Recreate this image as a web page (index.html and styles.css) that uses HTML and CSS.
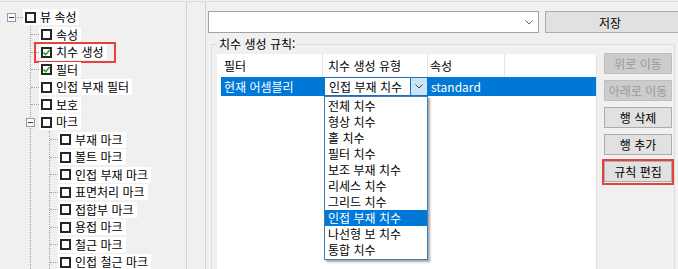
FILE: index.html
```html
<!DOCTYPE html>
<html lang="ko">
<head>
  <meta charset="UTF-8">
  <title>뷰 속성</title>
  <link rel="stylesheet" href="styles.css">
</head>
<body>
  <div class="app">
    <aside class="tree-pane">
      <ul class="tree">
        <li>
          <div class="row root"><span class="exp"></span><span class="hl short"></span><span class="item"><i class="cb"></i>뷰 속성</span></div>
          <ul class="kids">
            <li><div class="row"><span class="hl"></span><span class="item"><i class="cb"></i>속성</span></div></li>
            <li><div class="row"><span class="hl"></span><span class="item callout"><i class="cb"><svg viewBox="0 0 7 7" width="7" height="7"><path d="M0.5 3.6 L2.7 5.7 L6.6 1.1" fill="none" stroke="#1fa51f" stroke-width="1.6"/></svg></i>치수 생성</span></div></li>
            <li><div class="row"><span class="hl"></span><span class="item"><i class="cb"><svg viewBox="0 0 7 7" width="7" height="7"><path d="M0.5 3.6 L2.7 5.7 L6.6 1.1" fill="none" stroke="#1fa51f" stroke-width="1.6"/></svg></i>필터</span></div></li>
            <li><div class="row"><span class="hl"></span><span class="item"><i class="cb"></i>인접 부재 필터</span></div></li>
            <li><div class="row"><span class="hl"></span><span class="item"><i class="cb"></i>보호</span></div></li>
            <li class="open">
              <div class="row"><span class="exp"></span><span class="item"><i class="cb"></i>마크</span></div>
              <ul class="kids">
                <li><div class="row"><span class="hl"></span><span class="item"><i class="cb"></i>부재 마크</span></div></li>
                <li><div class="row"><span class="hl"></span><span class="item"><i class="cb"></i>볼트 마크</span></div></li>
                <li><div class="row"><span class="hl"></span><span class="item"><i class="cb"></i>인접 부재 마크</span></div></li>
                <li><div class="row"><span class="hl"></span><span class="item"><i class="cb"></i>표면처리 마크</span></div></li>
                <li><div class="row"><span class="hl"></span><span class="item"><i class="cb"></i>접합부 마크</span></div></li>
                <li><div class="row"><span class="hl"></span><span class="item"><i class="cb"></i>용접 마크</span></div></li>
                <li><div class="row"><span class="hl"></span><span class="item"><i class="cb"></i>철근 마크</span></div></li>
                <li><div class="row"><span class="hl"></span><span class="item"><i class="cb"></i>인접 철근 마크</span></div></li>
              </ul>
            </li>
          </ul>
        </li>
      </ul>
    </aside>

    <div class="splitter"></div>

    <main class="main">
      <div class="toolbar">
        <div class="combo">
          <svg class="chev" viewBox="0 0 8 5" width="8" height="5"><path d="M0.5 0.5 L4 4 L7.5 0.5" fill="none" stroke="#606060" stroke-width="1"/></svg>
        </div>
        <button class="btn save">저장</button>
      </div>

      <fieldset class="rules">
        <legend>치수 생성 규칙:</legend>
        <div class="grid">
          <div class="grid-head">
            <div class="hc c1">필터</div>
            <div class="hc c2">치수 생성 유형</div>
            <div class="hc c3">속성</div>
            <div class="hc c4"></div>
          </div>
          <div class="grid-row selected">
            <div class="cell c1">현재 어셈블리</div>
            <div class="cell c2">
              <div class="editor">
                <span class="editor-text">인접 부재 치수</span>
                <span class="editor-btn"><svg viewBox="0 0 8 5" width="8" height="5"><path d="M0.5 0.5 L4 4 L7.5 0.5" fill="none" stroke="#404040" stroke-width="1"/></svg></span>
              </div>
            </div>
            <div class="cell c3">standard</div>
            <div class="cell c4"></div>
          </div>

          <ul class="dropdown">
            <li>전체 치수</li>
            <li>형상 치수</li>
            <li>홀 치수</li>
            <li>필터 치수</li>
            <li>보조 부재 치수</li>
            <li>리세스 치수</li>
            <li>그리드 치수</li>
            <li class="active">인접 부재 치수</li>
            <li>나선형 보 치수</li>
            <li>통합 치수</li>
          </ul>
        </div>

        <div class="actions">
          <button class="btn" disabled>위로 이동</button>
          <button class="btn" disabled>아래로 이동</button>
          <button class="btn">행 삭제</button>
          <button class="btn">행 추가</button>
          <button class="btn callout-btn">규칙 편집</button>
        </div>
      </fieldset>
    </main>
  </div>
</body>
</html>
```

FILE: styles.css
```css
body { margin: 0; background-color: #f0f0f0; color: #000; font-family: "Noto Sans CJK KR", "Malgun Gothic", sans-serif; font-size: 12px; }
.app { display: flex; height: 267px; margin-top: 1px; border-top: 1px solid #dcdcdc; overflow: hidden; }

/* tree */
.tree-pane { width: 187px; flex: none; box-sizing: border-box; border-right: 1px solid #d4d4d4; padding-top: 6.25px; overflow: hidden; }
.tree, .kids { list-style: none; margin: 0; padding: 0; }
.kids { margin-left: 30px; border-left: 1px dotted #a0a0a0; }
.kids .kids { margin-left: 18px; min-height: 160px; }
.row { display: flex; align-items: center; height: 17.5px; }
.row.root { padding-left: 7px; }
.hl { width: 8px; flex: none; border-top: 1px dotted #a0a0a0; }
.hl.short { width: 6px; margin-left: 1px; }
.exp { width: 9px; height: 9px; flex: none; box-sizing: border-box; border: 1px solid #9a9a9a; background: #fbfbfb; display: flex; align-items: center; justify-content: center; }
.exp::before { content: ""; width: 5px; height: 1px; background: #1f3d8f; }
.kids .exp { margin-left: -5px; margin-right: 4px; }
.item { display: flex; align-items: center; gap: 4px; height: 16px; line-height: 16px; padding: 0 3px 0 2px; background: #fff; white-space: nowrap; position: relative; }
.cb { width: 11px; height: 11px; flex: none; box-sizing: border-box; border: 2px solid #262626; background: #fff; display: flex; align-items: center; justify-content: center; }
.cb svg { display: block; }
.callout::after { content: ""; position: absolute; left: -5px; right: -9px; top: -2px; bottom: -3px; border: 2px solid #e8403c; }

.splitter { width: 19px; flex: none; box-sizing: border-box; border-right: 1px solid #d4d4d4; }

/* right side */
.main { flex: 1; min-width: 0; overflow: hidden; padding-left: 2px; }
.toolbar { display: flex; gap: 6px; margin-top: 9px; height: 22px; }
.combo { width: 331px; flex: none; box-sizing: border-box; border: 1px solid #a2a2a2; background: #fff; display: flex; align-items: center; justify-content: flex-end; padding-right: 5px; }
.btn { font-family: inherit; font-size: 12px; height: 21px; line-height: 17px; padding: 0; box-sizing: border-box; border: 1px solid #adadad; background: #e1e1e1; color: #000; }
.btn:disabled { background: #cccccc; border-color: #bfbfbf; color: #9a9a9a; }
.btn.save { width: 140px; height: 22px; flex: none; padding-right: 10px; }

.rules { margin: 4px 0 0 3px; padding: 3px 1px 0 5px; width: 464px; height: 260px; box-sizing: border-box; border: 1px solid #dcdcdc; display: flex; gap: 7px; min-inline-size: 0; }
.rules legend { padding: 0 2px; line-height: 14px; }

.grid { width: 380px; flex: none; box-sizing: border-box; background: #fff; border-right: 1px solid #e3e3e3; position: relative; }
.grid-head { display: grid; grid-template-columns: 106px 105px 77px 1fr; height: 23px; line-height: 23px; }
.hc { border-right: 1px solid #e5e5e5; white-space: nowrap; }
.hc.c1 { padding-left: 7px; }
.hc.c2 { padding-left: 5px; }
.hc.c3 { padding-left: 2px; }
.hc.c4 { border-right: none; }
.grid-row { display: grid; grid-template-columns: 102px 105px 77px 1fr; height: 19px; line-height: 19px; margin-left: 4px; }
.grid-row.selected { background: #0078d7; color: #fff; }
.cell { white-space: nowrap; }
.cell.c1 { padding-left: 3px; }
.cell.c2 { padding-left: 1px; }
.cell.c3 { padding-left: 3px; }
.editor { display: flex; height: 19px; box-sizing: border-box; border: 1px solid #1a6fc0; background: #fff; color: #000; line-height: 17px; }
.editor-text { padding-left: 4px; }
.editor-btn { width: 16px; margin-left: auto; background: #cce4f7; border-left: 1px solid #1a6fc0; display: flex; align-items: center; justify-content: center; }

.dropdown { position: absolute; top: 42px; left: 107px; width: 104px; box-sizing: border-box; margin: 0; padding: 1px 0; list-style: none; background: #fff; border: 1px solid #3f7cba; box-shadow: 2px 2px 2px rgba(0, 0, 0, 0.35); }
.dropdown li { height: 16px; line-height: 16px; padding-left: 3px; white-space: nowrap; }
.dropdown li.active { background: #0078d7; color: #fff; }

.actions { width: 68px; flex: none; display: flex; flex-direction: column; gap: 6px; margin-top: -1px; }
.callout-btn { position: relative; }
.callout-btn::after { content: ""; position: absolute; left: -3px; right: -3px; top: -3px; bottom: -4px; border: 2px solid #e8403c; }
```
